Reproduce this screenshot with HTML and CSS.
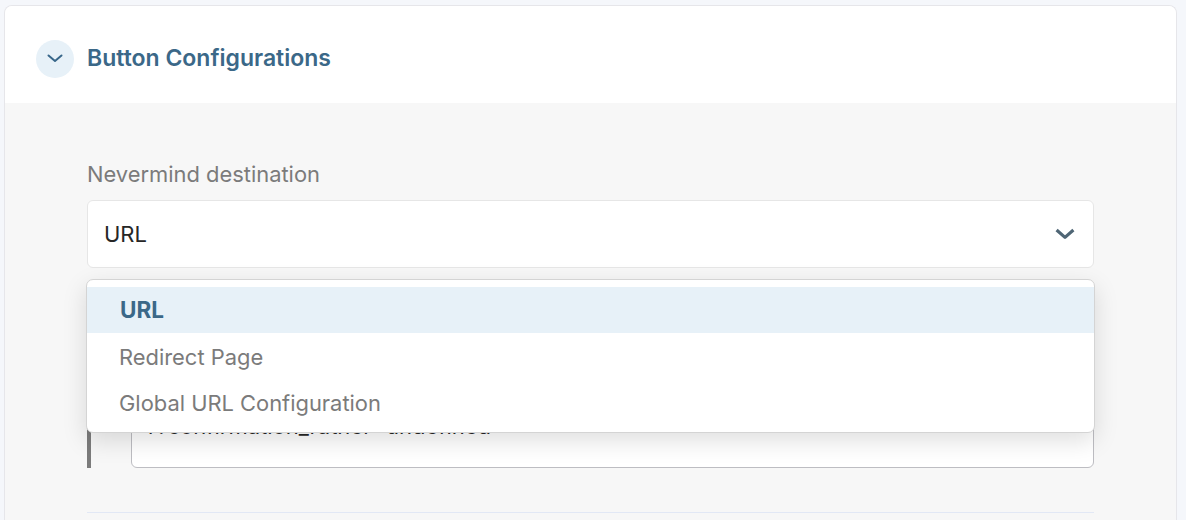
FILE: index.html
```html
<!DOCTYPE html>
<html lang="en">
<head>
    <meta charset="UTF-8">
    <title>Button Configurations</title>
    <link rel="stylesheet" href="styles.css">
</head>
<body>
    <div class="card">
        <div class="card-header">
            <span class="toggle">
                <svg width="16" height="9" viewBox="0 0 16 9"><path d="M1.500 1.500 8 7l6.500-5.500" fill="none" stroke="#38678a" stroke-width="2" stroke-linecap="round" stroke-linejoin="round"/></svg>
            </span>
            <h2>Button Configurations</h2>
        </div>
        <div class="card-body">
            <div class="field">
                <label>Nevermind destination</label>
                <div class="select">
                    <span>URL</span>
                    <svg width="20" height="12" viewBox="0 0 20 12"><path d="M1.600 2 10 9.400 18.400 2" fill="none" stroke="#4f6675" stroke-width="3.200" stroke-linejoin="round"/></svg>
                </div>
                <ul class="menu">
                    <li class="selected">URL</li>
                    <li>Redirect Page</li>
                    <li>Global URL Configuration</li>
                </ul>
            </div>
            <div class="nested">
                <div class="url-input">r?confirmation_rather=undefined</div>
            </div>
            <hr class="divider">
        </div>
    </div>
</body>
</html>
```

FILE: styles.css
```css
html, body {
    height: 100%;
}
body {
    margin: 0;
    padding: 5px 9px 0 4px;
    box-sizing: border-box;
    overflow: hidden;
    font-family: Inter, "Liberation Sans", sans-serif;
    background-color: #f5f7fb;
}
.card {
    background: #f7f7f7;
    border: 1px solid #e6e6ea;
    border-bottom: none;
    border-radius: 8px 8px 0 0;
    height: 515px;
    box-sizing: border-box;
    overflow: hidden;
}
.card-header {
    display: flex;
    align-items: center;
    gap: 13px;
    height: 97px;
    padding: 7px 0 0 31px;
    box-sizing: border-box;
    background: #fff;
}
.toggle {
    display: flex;
    align-items: center;
    justify-content: center;
    width: 38px;
    height: 38px;
    margin-top: 1px;
    border-radius: 50%;
    background: #e7f1f8;
}
.card-header h2 {
    margin: 0;
    font-size: 23px;
    font-weight: 600;
    color: #3b6888;
}
.card-body {
    padding: 58px 82px 0 82px;
}
.field {
    position: relative;
}
.field label {
    display: block;
    font-size: 21.900px;
    line-height: 26px;
    color: #7b7b7b;
    margin-bottom: 13px;
}
.select {
    display: flex;
    align-items: center;
    justify-content: space-between;
    height: 68px;
    padding: 0 18px 0 16px;
    box-sizing: border-box;
    background: #fff;
    border: 1px solid #e6e6e6;
    border-radius: 6px;
    font-size: 22px;
    color: #262626;
}
.menu {
    position: absolute;
    z-index: 2;
    top: 118px;
    left: -1px;
    right: -1px;
    margin: 0;
    padding: 7px 0;
    list-style: none;
    background: #fff;
    border-radius: 7px;
    border: 1px solid #d4d4d4;
    box-shadow: 0 8px 24px rgba(0, 0, 0, 0.13);
}
.menu li {
    height: 46px;
    line-height: 48px;
    padding-left: 32px;
    font-size: 21.900px;
    color: #7b7b7b;
}
.menu li.selected {
    padding-left: 33px;
    background: #e7f1f8;
    color: #3b6888;
    font-size: 22.500px;
    font-weight: 700;
    line-height: 46px;
}
.nested {
    margin-top: 43px;
    height: 157px;
    padding-left: 40px;
    border-left: 4px solid #7b7b7b;
    display: flex;
    align-items: flex-end;
}
.url-input {
    flex: 1;
    height: 100px;
    padding: 44px 16px 0;
    box-sizing: border-box;
    background: #fff;
    border: 1px solid #bdbdc2;
    border-radius: 6px;
    font-size: 22px;
    line-height: 26px;
    color: #262626;
}
.divider {
    margin: 44px 0 0;
    border: none;
    border-top: 1px solid #e2e8f5;
}
```
